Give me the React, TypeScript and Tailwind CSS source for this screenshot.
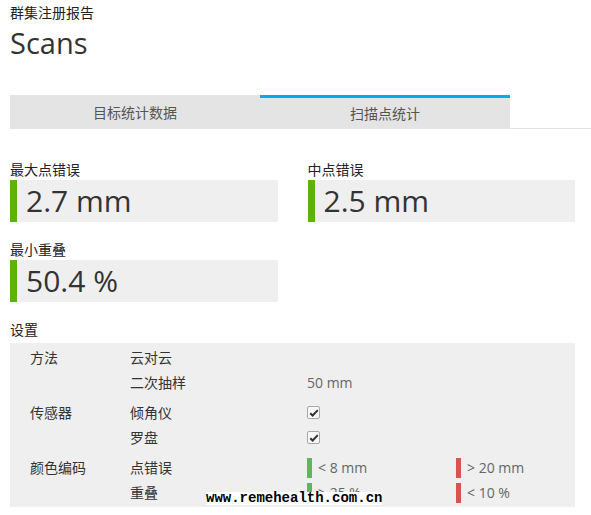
const FONT = "font-['Open_Sans','Noto_Sans_CJK_SC',sans-serif]";

function StatCard({ label, value }: { label: string; value: string }) {
  return (
    <div>
      <div className="h-5 text-[14px] leading-5 text-[#222]">{label}</div>
      <div className="flex h-[42px] bg-[#efefef]">
        <div className="w-[7px] bg-[#5ab400]" />
        <div className="pl-[9px] text-[30px] leading-[42px] text-[#333]">{value}</div>
      </div>
    </div>
  );
}

function CheckBox() {
  return (
    <span className="flex h-[13px] w-[13px] items-center justify-center rounded-[2px] border border-[#a8a8a8] bg-[#f8f8f8]">
      <svg viewBox="0 0 12 12" className="h-[10px] w-[10px]">
        <path d="M1.5 6.2 L4.4 9 L10.5 2.6" fill="none" stroke="#333" strokeWidth={2.4} />
      </svg>
    </span>
  );
}

function Swatch({ color, text }: { color: string; text: string }) {
  return (
    <div className="flex items-center gap-[6px]">
      <span className={`h-5 w-[5px] ${color}`} />
      <span className="text-[#666]">{text}</span>
    </div>
  );
}

type Row = { group?: string; name: string; a?: React.ReactNode; b?: React.ReactNode };

const groups: Row[][] = [
  [
    { group: "方法", name: "云对云" },
    { name: "二次抽样", a: <span className="text-[#666]">50 mm</span> },
  ],
  [
    { group: "传感器", name: "倾角仪", a: <CheckBox /> },
    { name: "罗盘", a: <CheckBox /> },
  ],
  [
    {
      group: "颜色编码",
      name: "点错误",
      a: <Swatch color="bg-[#5cb85c]" text="< 8 mm" />,
      b: <Swatch color="bg-[#d9534f]" text="> 20 mm" />,
    },
    {
      name: "重叠",
      a: <Swatch color="bg-[#5cb85c]" text="> 25 %" />,
      b: <Swatch color="bg-[#d9534f]" text="< 10 %" />,
    },
  ],
];

export default function App() {
  return (
    <div className={`relative h-[515px] w-[591px] overflow-hidden bg-white ${FONT}`}>
      <div className="pl-[10px] pt-[3px]">
        <div className="h-5 text-[14px] leading-5 text-[#222]">群集注册报告</div>
        <div className="h-10 text-[29px] leading-10 text-[#333]">Scans</div>
      </div>

      {/* Tabs */}
      <div className="mt-[32px] flex pl-[10px]">
        <div className="flex h-[34px] w-[250px] items-center justify-center bg-[#e4e4e4] pt-[1px] text-[14px] text-[#555]">
          目标统计数据
        </div>
        <div className="flex h-[34px] w-[250px] items-center justify-center border-t-[3px] border-[#0aa8e6] bg-[#e4e4e4] text-[14px] text-[#555]">
          扫描点统计
        </div>
        <div className="flex-1 border-b border-[#e2e2e2]" />
      </div>

      <div className="ml-[10px] mt-[31px] w-[565px]">
        <div className="grid grid-cols-2 gap-x-[30px] gap-y-[18px]">
          <StatCard label="最大点错误" value="2.7 mm" />
          <StatCard label="中点错误" value="2.5 mm" />
          <StatCard label="最小重叠" value="50.4 %" />
        </div>

        <div className="mt-[18px] h-5 text-[14px] leading-5 text-[#222]">设置</div>
        <div className="mt-[3px] flex flex-col gap-[5px] bg-[#efefef] pb-[2px] pl-[20px] pt-[2px] text-[14px] text-[#333]">
          {groups.map((rows, gi) => (
            <div key={gi}>
              {rows.map((r) => (
                <div key={r.name} className="grid h-[25px] grid-cols-[100px_177px_149px_1fr] items-center leading-[25px]">
                  <span>{r.group ?? ""}</span>
                  <span>{r.name}</span>
                  <div>{r.a}</div>
                  <div>{r.b}</div>
                </div>
              ))}
            </div>
          ))}
        </div>
      </div>

      <div className="absolute left-[206px] top-[492px] bg-white font-['Liberation_Mono',monospace] text-[14px] font-bold leading-[13px] text-black">
        www.remehealth.com.cn
      </div>
    </div>
  );
}
